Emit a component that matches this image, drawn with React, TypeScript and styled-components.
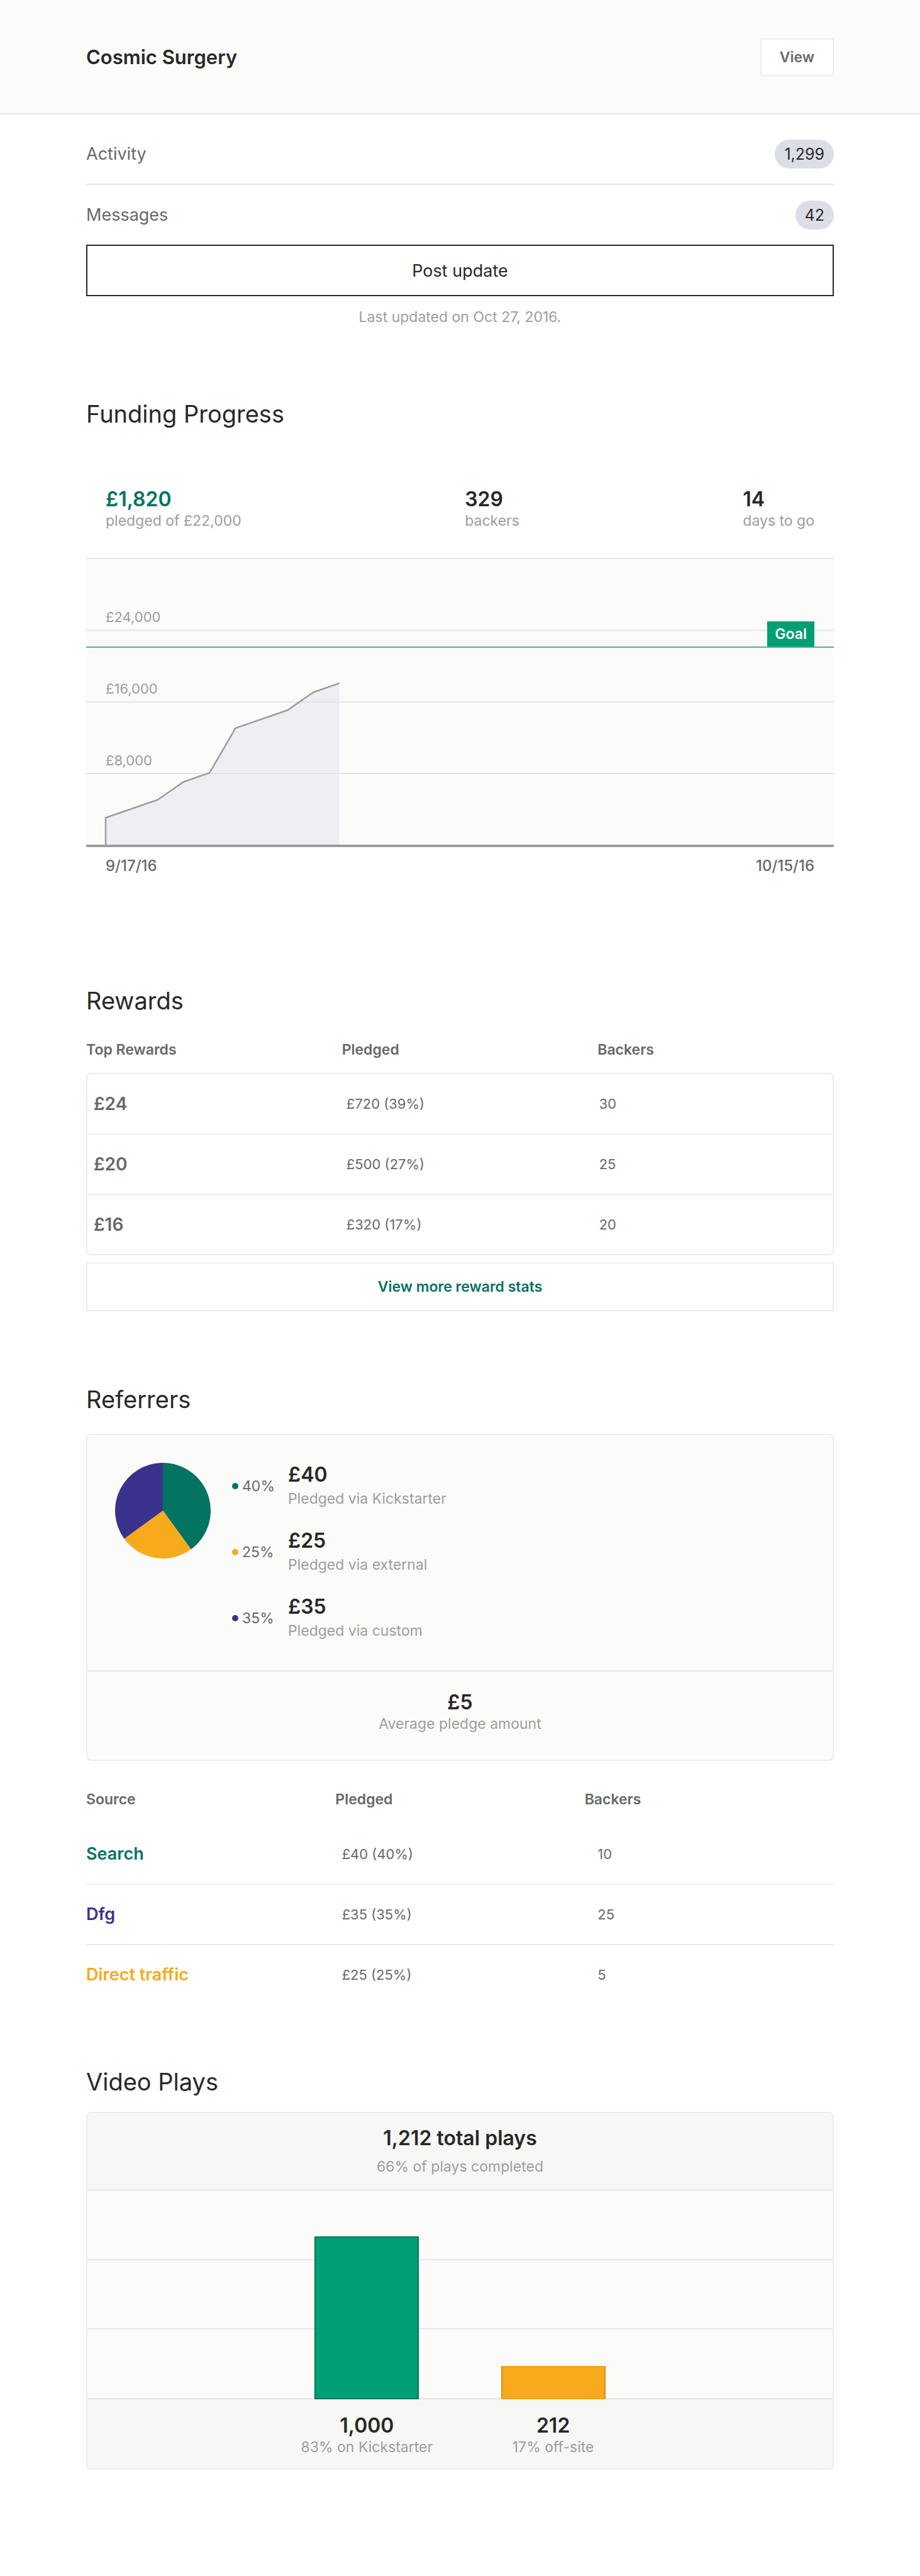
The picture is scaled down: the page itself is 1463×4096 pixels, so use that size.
import React from "react";
import styled, { createGlobalStyle } from "styled-components";

const color = {
  ink: "#282828",
  body: "#656969",
  muted: "#9b9e9e",
  green: "#037362",
  brightGreen: "#009e74",
  orange: "#f7aa1b",
  orangeEdge: "#e6861a",
  purple: "#3b328e",
  line: "#e6e6e6",
  frame: "#ededf1",
  paper: "#fbfbf9",
  shade: "#f7f7f5",
};

const GlobalStyle = createGlobalStyle`
  *, *::before, *::after { box-sizing: border-box; }
  body {
    margin: 0;
    background: #fff;
    color: ${color.ink};
    font-family: Inter, "Liberation Sans", sans-serif;
    font-size: 23px;
    line-height: 32px;
  }
  button { font-family: inherit; cursor: pointer; }
  a { color: inherit; text-decoration: none; }
`;

const Header = styled.header`
  display: flex;
  align-items: center;
  justify-content: space-between;
  min-height: 182px;
  padding: 2px 137px 0;
  background: ${color.paper};
  border-bottom: 2px solid ${color.line};
`;

const ProjectTitle = styled.h1`
  margin: 0;
  font-size: 31px;
  font-weight: 600;
  line-height: 40px;
`;

const ViewButton = styled.button`
  height: 60px;
  padding: 0 29px;
  border: 2px solid ${color.frame};
  background: #fff;
  color: ${color.body};
  font-size: 23px;
  font-weight: 600;
`;

const Main = styled.main`
  padding: 15px 137px 168px;
`;

const NavLink = styled.a`
  display: flex;
  align-items: center;
  justify-content: space-between;
  min-height: 97px;
  padding-top: 1px;
  border-bottom: 2px solid ${color.line};
  color: ${color.body};
  font-size: 27px;

  &:last-child {
    min-height: 95px;
    border-bottom: 0;
  }
`;

const Count = styled.span`
  padding: 0 15px;
  border-radius: 23px;
  background: #dcdee7;
  color: ${color.ink};
  font-size: 25px;
  line-height: 46px;
`;

const PostButton = styled.button`
  display: block;
  width: 100%;
  height: 82px;
  border: 2px solid ${color.ink};
  background: #fff;
  color: ${color.ink};
  font-size: 27px;
`;

const Updated = styled.p`
  margin: 17px 0 0;
  text-align: center;
  color: ${color.muted};
`;

const Section = styled.section<{ $top: number }>`
  margin-top: ${(p) => p.$top}px;
`;

const Heading = styled.h2`
  margin: 0;
  font-size: 38px;
  font-weight: 400;
  line-height: 48px;
`;

const Stats = styled.div`
  display: flex;
  justify-content: space-between;
  margin: 94px 0 43px;
  padding: 0 31px;
`;

const Value = styled.div<{ $tone?: string }>`
  color: ${(p) => p.$tone ?? color.ink};
  font-size: 32px;
  font-weight: 600;
  line-height: 36px;
`;

const Caption = styled.div`
  color: ${color.muted};
`;

const FundingPlot = styled.div`
  position: relative;
  background: ${color.paper};
  border-bottom: 4px solid #999e9d;
`;

const Band = styled.div`
  display: flex;
  align-items: flex-end;
  height: 114px;
  padding: 0 31px 8px;
  border-top: 2px solid ${color.line};
  color: ${color.muted};
  font-size: 22px;
  line-height: 24px;
`;

const FundingCurve = styled.svg`
  position: absolute;
  inset: 0;
  width: 100%;
  height: 100%;
`;

const GoalLine = styled.div`
  position: absolute;
  left: 0;
  right: 0;
  display: flex;
  justify-content: flex-end;
  align-items: flex-end;
  height: 40px;
  padding: 0 31px;
  border-bottom: 2px solid #40b592;
`;

const GoalTag = styled.span`
  padding: 0 12px;
  background: ${color.brightGreen};
  color: #fff;
  font-size: 23px;
  font-weight: 600;
  line-height: 40px;
`;

const Dates = styled.div`
  display: flex;
  justify-content: space-between;
  margin-top: 14px;
  padding: 0 31px;
  color: ${color.body};
  font-size: 24px;
  font-weight: 500;
`;

const Table = styled.table`
  display: block;
  width: 100%;
  color: ${color.body};
  text-align: left;
`;

const HeadRow = styled.tr<{ $cols: string }>`
  display: grid;
  grid-template-columns: ${(p) => p.$cols};
`;

const Th = styled.th`
  padding: 0;
  font-weight: 600;
`;

const Thead = styled.thead<{ $top: number; $bottom: number }>`
  display: block;
  margin: ${(p) => p.$top}px 0 ${(p) => p.$bottom}px;
`;

const Tbody = styled.tbody<{ $boxed?: boolean }>`
  display: block;
  border: ${(p) => (p.$boxed ? `2px solid ${color.frame}` : "0")};
  border-radius: 8px;
  padding: 0;
`;

const Row = styled.tr<{ $cols: string; $inset?: number }>`
  display: grid;
  grid-template-columns: ${(p) => p.$cols};
  align-items: center;
  height: 96px;
  padding-left: ${(p) => p.$inset ?? 0}px;
  border-bottom: 2px solid ${color.frame};

  &:last-child {
    height: 94px;
    border-bottom: 0;
  }
`;

const Td = styled.td`
  padding: 0;
  font-size: 22px;
`;

const Amount = styled(Td)`
  font-size: 28px;
  font-weight: 600;
`;

const Source = styled(Td)<{ $tone: string }>`
  color: ${(p) => p.$tone};
  font-size: 27px;
  font-weight: 600;
`;

const MoreButton = styled.button`
  display: block;
  width: 100%;
  height: 78px;
  margin-top: 11px;
  border: 2px solid ${color.frame};
  background: #fff;
  color: ${color.green};
  font-size: 23px;
  font-weight: 600;
`;

const Panel = styled.div<{ $top: number }>`
  margin-top: ${(p) => p.$top}px;
  overflow: hidden;
  border: 2px solid ${color.frame};
  border-radius: 8px;
  background: ${color.paper};
`;

const Breakdown = styled.div`
  display: flex;
  align-items: flex-start;
  gap: 34px;
  padding: 44px 44px 47px;
`;

const Legend = styled.ul`
  display: grid;
  gap: 33px;
  margin: 0;
  padding: 1px 0 0;
  list-style: none;
`;

const LegendItem = styled.li`
  display: grid;
  grid-template-columns: 65px auto;
  align-items: center;
  gap: 24px;
`;

const Percent = styled.div<{ $tone: string }>`
  display: flex;
  align-items: center;
  gap: 6px;
  color: #68676f;

  &::before {
    content: "";
    width: 10px;
    height: 10px;
    flex: none;
    border-radius: 50%;
    background: ${(p) => p.$tone};
  }
`;

const LegendText = styled.div`
  display: grid;
  gap: 4px;
`;

const Average = styled.div`
  padding: 31px 0 41px;
  border-top: 2px solid ${color.line};
  text-align: center;
`;

const PlaysHeader = styled.div`
  display: grid;
  gap: 11px;
  padding: 22px 0 20px;
  border-bottom: 2px solid ${color.line};
  background: ${color.shade};
  text-align: center;
`;

const PlaysPlot = styled.div`
  display: grid;
  height: 332px;

  & > * {
    grid-area: 1 / 1;
  }
`;

const GridLines = styled.div`
  display: grid;
  grid-template-rows: repeat(3, 1fr);
`;

const GridLine = styled.div`
  border-bottom: 2px solid ${color.line};
`;

const Quarters = styled.div`
  display: grid;
  grid-template-columns: repeat(4, 1fr);
  justify-items: center;
  align-items: end;
  text-align: center;

  & > :first-child {
    grid-column: 2;
  }
`;

const Bar = styled.div<{ $fill: string; $edge: string; $cap: string }>`
  width: 56%;
  border: 2px solid ${(p) => p.$edge};
  border-top-color: ${(p) => p.$cap};
  border-bottom-color: ${(p) => p.$cap};
  background: ${(p) => p.$fill};
`;

const PlaysFooter = styled(Quarters)`
  padding: 24px 0 18px;
  background: ${color.shade};
`;

const AXIS_MAX = 32;
const START_X = 31;
const STEP_X = 41.3;
const pledged = [3, 4, 5, 7, 8, 13, 14, 15, 17, 18];
const goal = 22;

const curve = pledged
  .map((v, i) => `L${START_X + i * STEP_X} ${456 - (v * 456) / AXIS_MAX}`)
  .join(" ");

const rewards = [
  ["£24", "£720 (39%)", "30"],
  ["£20", "£500 (27%)", "25"],
  ["£16", "£320 (17%)", "20"],
];

const referrers = [
  { tone: color.green, percent: 40, amount: "£40", via: "Kickstarter" },
  { tone: color.orange, percent: 25, amount: "£25", via: "external" },
  { tone: color.purple, percent: 35, amount: "£35", via: "custom" },
];

const sources = [
  { tone: color.green, name: "Search", pledged: "£40 (40%)", backers: "10" },
  { tone: color.purple, name: "Dfg", pledged: "£35 (35%)", backers: "25" },
  { tone: color.orange, name: "Direct traffic", pledged: "£25 (25%)", backers: "5" },
];

const plays = [
  {
    count: "1,000",
    share: 83,
    where: "on Kickstarter",
    fill: color.brightGreen,
    edge: color.green,
    cap: color.green,
  },
  {
    count: "212",
    share: 17,
    where: "off-site",
    fill: color.orange,
    edge: color.orangeEdge,
    cap: "#f5a21c",
  },
];

function Pie() {
  let start = 0;
  const at = (part: number) => {
    const a = part * 2 * Math.PI;
    return `${76 + 76 * Math.sin(a)} ${76 - 76 * Math.cos(a)}`;
  };
  return (
    <svg width="152" height="152" viewBox="0 0 152 152" role="img" aria-label="Pledges by referrer">
      {referrers.map((r) => {
        const end = start + r.percent / 100;
        const d = `M76 76 L${at(start)} A76 76 0 0 1 ${at(end)} Z`;
        start = end;
        return <path key={r.via} d={d} fill={r.tone} />;
      })}
    </svg>
  );
}

export default function App() {
  return (
    <>
      <GlobalStyle />
      <Header>
        <ProjectTitle>Cosmic Surgery</ProjectTitle>
        <ViewButton type="button">View</ViewButton>
      </Header>
      <Main>
        <nav>
          <NavLink href="#activity">
            Activity <Count>1,299</Count>
          </NavLink>
          <NavLink href="#messages">
            Messages <Count>42</Count>
          </NavLink>
        </nav>
        <PostButton type="button">Post update</PostButton>
        <Updated>Last updated on Oct 27, 2016.</Updated>

        <Section $top={114}>
          <Heading>Funding Progress</Heading>
          <Stats>
            <div>
              <Value $tone={color.green}>£1,820</Value>
              <Caption>pledged of £22,000</Caption>
            </div>
            <div>
              <Value>329</Value>
              <Caption>backers</Caption>
            </div>
            <div>
              <Value>14</Value>
              <Caption>days to go</Caption>
            </div>
          </Stats>
          <FundingPlot>
            <Band>£24,000</Band>
            <Band>£16,000</Band>
            <Band>£8,000</Band>
            <Band />
            <FundingCurve viewBox="0 0 1189 456" preserveAspectRatio="none" aria-hidden="true">
              <path d={`M${START_X} 456 ${curve} V456 Z`} fill="#dcdee8" fillOpacity="0.4" />
              <path
                d={`M${START_X} 456 ${curve}`}
                fill="none"
                stroke={color.muted}
                strokeWidth="2.5"
                vectorEffect="non-scaling-stroke"
              />
            </FundingCurve>
            <GoalLine style={{ bottom: `${(goal / AXIS_MAX) * 100}%` }}>
              <GoalTag>Goal</GoalTag>
            </GoalLine>
          </FundingPlot>
          <Dates>
            <span>9/17/16</span>
            <span>10/15/16</span>
          </Dates>
        </Section>

        <Section $top={174}>
          <Heading>Rewards</Heading>
          <Table>
            <Thead $top={38} $bottom={21}>
              <HeadRow $cols="34.2% 34.2% 1fr">
                <Th scope="col">Top Rewards</Th>
                <Th scope="col">Pledged</Th>
                <Th scope="col">Backers</Th>
              </HeadRow>
            </Thead>
            <Tbody $boxed>
              {rewards.map(([tier, amount, backers]) => (
                <Row key={tier} $cols="34.2% 34.2% 1fr" $inset={10}>
                  <Amount>{tier}</Amount>
                  <Td>{amount}</Td>
                  <Td>{backers}</Td>
                </Row>
              ))}
            </Tbody>
          </Table>
          <MoreButton type="button">View more reward stats</MoreButton>
        </Section>

        <Section $top={116}>
          <Heading>Referrers</Heading>
          <Panel $top={31}>
            <Breakdown>
              <Pie />
              <Legend>
                {referrers.map((r) => (
                  <LegendItem key={r.via}>
                    <Percent $tone={r.tone}>{r.percent}%</Percent>
                    <LegendText>
                      <Value>{r.amount}</Value>
                      <Caption>Pledged via {r.via}</Caption>
                    </LegendText>
                  </LegendItem>
                ))}
              </Legend>
            </Breakdown>
            <Average>
              <Value>£5</Value>
              <Caption>Average pledge amount</Caption>
            </Average>
          </Panel>
          <Table>
            <Thead $top={45} $bottom={24}>
              <HeadRow $cols="repeat(3, 1fr)">
                <Th scope="col">Source</Th>
                <Th scope="col">Pledged</Th>
                <Th scope="col">Backers</Th>
              </HeadRow>
            </Thead>
            <Tbody>
              {sources.map((s) => (
                <Row key={s.name} $cols="34.2% 34.2% 1fr">
                  <Source $tone={s.tone}>{s.name}</Source>
                  <Td>{s.pledged}</Td>
                  <Td>{s.backers}</Td>
                </Row>
              ))}
            </Tbody>
          </Table>
        </Section>

        <Section $top={99}>
          <Heading>Video Plays</Heading>
          <Panel $top={24}>
            <PlaysHeader>
              <Value>1,212 total plays</Value>
              <Caption>66% of plays completed</Caption>
            </PlaysHeader>
            <PlaysPlot>
              <GridLines>
                <GridLine />
                <GridLine />
                <GridLine />
              </GridLines>
              <Quarters>
                {plays.map((p) => (
                  <Bar
                    key={p.count}
                    $fill={p.fill}
                    $edge={p.edge}
                    $cap={p.cap}
                    style={{ height: `${p.share * 0.94}%` }}
                  />
                ))}
              </Quarters>
            </PlaysPlot>
            <PlaysFooter>
              {plays.map((p) => (
                <div key={p.count}>
                  <Value>{p.count}</Value>
                  <Caption>
                    {p.share}% {p.where}
                  </Caption>
                </div>
              ))}
            </PlaysFooter>
          </Panel>
        </Section>
      </Main>
    </>
  );
}
